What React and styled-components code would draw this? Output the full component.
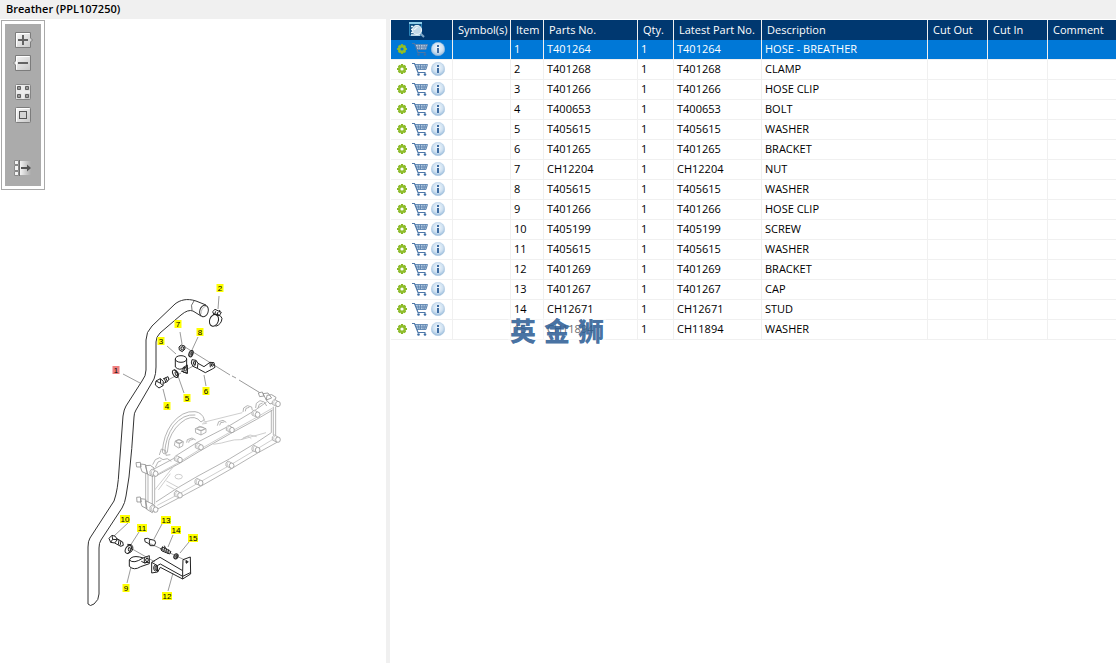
import React, { useState } from "react";
import styled, { createGlobalStyle } from "styled-components";

const parts = [
    { item: 1, partNo: "T401264", description: "HOSE - BREATHER" },
    { item: 2, partNo: "T401268", description: "CLAMP" },
    { item: 3, partNo: "T401266", description: "HOSE CLIP" },
    { item: 4, partNo: "T400653", description: "BOLT" },
    { item: 5, partNo: "T405615", description: "WASHER" },
    { item: 6, partNo: "T401265", description: "BRACKET" },
    { item: 7, partNo: "CH12204", description: "NUT" },
    { item: 8, partNo: "T405615", description: "WASHER" },
    { item: 9, partNo: "T401266", description: "HOSE CLIP" },
    { item: 10, partNo: "T405199", description: "SCREW" },
    { item: 11, partNo: "T405615", description: "WASHER" },
    { item: 12, partNo: "T401269", description: "BRACKET" },
    { item: 13, partNo: "T401267", description: "CAP" },
    { item: 14, partNo: "CH12671", description: "STUD" },
    { item: 15, partNo: "CH11894", description: "WASHER" },
];

const columns = [
    { title: "Symbol(s)", width: 58 },
    { title: "Item", width: 33 },
    { title: "Parts No.", width: 94 },
    { title: "Qty.", width: 36 },
    { title: "Latest Part No.", width: 88 },
    { title: "Description", width: 166 },
    { title: "Cut Out", width: 60 },
    { title: "Cut In", width: 60 },
    { title: "Comment" },
];

// centre of every number label on the drawing
const callouts = [
    { item: 1, x: 116, y: 370 },
    { item: 2, x: 220, y: 288 },
    { item: 3, x: 161, y: 341 },
    { item: 4, x: 167, y: 406 },
    { item: 5, x: 187, y: 398 },
    { item: 6, x: 206, y: 391 },
    { item: 7, x: 178, y: 324 },
    { item: 8, x: 200, y: 332 },
    { item: 9, x: 126, y: 588 },
    { item: 10, x: 125, y: 519 },
    { item: 11, x: 142, y: 528 },
    { item: 12, x: 167, y: 596 },
    { item: 13, x: 166, y: 520 },
    { item: 14, x: 176, y: 530 },
    { item: 15, x: 193, y: 538 },
];

// bolts round the edge of the cover
const bolts = [
    [180, 240], [243, 202], [336, 150], [413, 104], [474, 72],
    [180, 346], [242, 309], [335, 257], [413, 210], [474, 179],
    [107, 281], [107, 389],
];

export default function App(){
    const [selected,setSelected] = useState(1);

    return (
        <Page>
            <GlobalStyle />
            <Symbols />
            <TitleBar>Breather (PPL107250)</TitleBar>
            <Content>
                <Viewer>
                    <Toolbar>
                        <ToolGroup>
                            <ToolButton aria-label="Zoom in"><ToolIcon viewBox="0 0 20 16"><use href="#zoom-in" /></ToolIcon></ToolButton>
                            <ToolButton aria-label="Zoom out"><ToolIcon viewBox="0 0 20 16"><use href="#zoom-out" /></ToolIcon></ToolButton>
                        </ToolGroup>
                        <ToolGroup>
                            <ToolButton aria-label="Fit to window"><ToolIcon viewBox="0 0 20 16"><use href="#fit" /></ToolIcon></ToolButton>
                            <ToolButton aria-label="Actual size"><ToolIcon viewBox="0 0 20 16"><use href="#actual" /></ToolIcon></ToolButton>
                        </ToolGroup>
                        <ToolGroup $last>
                            <ToolButton aria-label="Hide panel"><ToolIcon viewBox="0 0 20 16"><use href="#hide" /></ToolIcon></ToolButton>
                        </ToolGroup>
                    </Toolbar>
                    <Drawing selected={selected} />
                </Viewer>
                <TablePane>
                    <PartsTable>
                        <colgroup>
                            <Col $width={62} />
                            {columns.map((col) => <Col key={col.title} $width={col.width} />)}
                        </colgroup>
                        <thead>
                            <tr>
                                <HeadCell $icon>
                                    <IconButton aria-label="Search parts"><Icon $width={18} $height={18} viewBox="0 0 18 18"><use href="#search" /></Icon></IconButton>
                                </HeadCell>
                                {columns.map((col) => <HeadCell key={col.title}>{col.title}</HeadCell>)}
                            </tr>
                        </thead>
                        <tbody>
                            {parts.map((part) => (
                                <Row key={part.item} $selected={part.item === selected} onClick={() => setSelected(part.item)}>
                                    <Cell>
                                        <Actions>
                                            <IconButton aria-label="Options"><Icon $width={12} $height={14} viewBox="0 0 12 14"><use href="#gear" /></Icon></IconButton>
                                            <IconButton aria-label="Add to cart"><Icon $width={16} $height={14} viewBox="0 0 16 14"><use href="#cart" /></Icon></IconButton>
                                            <IconButton aria-label="Information"><Icon $width={14} $height={14} viewBox="0 0 14 14"><use href="#info" /></Icon></IconButton>
                                        </Actions>
                                    </Cell>
                                    <Cell />
                                    <Cell>{part.item}</Cell>
                                    <Cell>{part.partNo}</Cell>
                                    <Cell>1</Cell>
                                    <Cell>{part.partNo}</Cell>
                                    <Cell>{part.description}</Cell>
                                    <Cell />
                                    <Cell />
                                    <Cell />
                                </Row>
                            ))}
                        </tbody>
                    </PartsTable>
                    <Watermark><span>英</span><span>金</span><span>狮</span></Watermark>
                </TablePane>
            </Content>
        </Page>
    )
}

function Drawing({ selected }){
    return (
        <DrawingSvg viewBox="45 19 341 644" preserveAspectRatio="xMinYMin" role="img" aria-label="Breather parts drawing">
            {/* hose */}
            <g fill="none" stroke="#333" strokeWidth="1">
                <path d="M206 305L196 301C187 298 180 300 175 304L152 326Q146 332 146 340V370Q146 376 142 381L126 406Q124 409 123 416L119 470Q118 490 114 501L90 538Q88 541 88 547V604Q90 607 94 604Q99 600 99 594V548Q99 543 101 540L122 508Q125 503 126 496L129 477Q132 450 134 417Q134 413 136 410L154 379Q156 374 156 367V342Q156 337 160 333L181 315Q188 309 193 311L201 316" />
                <path d="M194 301Q190 305 192 310" strokeWidth=".7" />
                <ellipse cx="204" cy="311" rx="4.2" ry="5.8" transform="rotate(18 204 311)" />
                <path d="M201 314Q201 308 206 306" stroke="#888" strokeWidth=".6" />
            </g>

            {/* leader lines */}
            <g fill="none" stroke="#555" strokeWidth=".6">
                <path d="M123 374L140 383M219 296L218 309M180 332L182 344M198 337L192 350M167 346L176 354M163 389L166 401M178 376L184 393M204 375L206 386M129 522L114 536M139 532L130 546M162 524L154 539M173 535L168 547M189 542L180 553M131 567L127 583M173 573L168 591M127 546L155 562M151 544L189 562M185 347L230 375M232 376L236 378M239 380L262 394M168 380L181 373M186 370L195 365" />
            </g>

            {/* upper clamp, clip, bolt and bracket */}
            <g transform="translate(80 275) scale(.3333)" fill="none" stroke="#222" strokeWidth="3" strokeLinejoin="round">
                <ellipse cx="402" cy="136" rx="13" ry="18" transform="rotate(20 402 136)" />
                <path d="M399 118Q420 115 426 130Q425 148 407 154M398 110L405 103L424 112L418 122L401 117ZM407 109L404 118M414 111L411 121M419 105V112" />
                <ellipse cx="303" cy="252" rx="17" ry="10" />
                <path d="M286 252V276Q298 289 315 277L322 276V295L303 288M320 252V276M309 278L322 270V295L309 291Z" />
                <ellipse cx="316" cy="283" rx="3" ry="5" />
                <path d="M228 318L241 311L250 319L249 332L237 339L226 330ZM241 311L242 325L249 332M242 325L228 318M249 312L264 305Q270 313 262 320L251 325M253 310L257 321M257 308L262 319" />
                <ellipse cx="286" cy="296" rx="7" ry="12" transform="rotate(-28 286 296)" />
                <ellipse cx="289" cy="296" rx="3" ry="6" transform="rotate(-28 289 296)" />
                <path d="M283 285L293 291Q299 301 290 309" />
                <path d="M297 216L304 210L314 213L315 222L307 230L298 225Z" fill="#ddd" />
                <ellipse cx="307" cy="220" rx="4" ry="5" />
                <ellipse cx="333" cy="236" rx="6" ry="10" transform="rotate(20 333 236)" fill="#aaa" />
                <ellipse cx="335" cy="236" rx="2" ry="5" />
                <path d="M336 254L348 256L354 265L372 275L390 262L402 263L405 277L397 282L376 293L352 280L339 274L334 264ZM354 265L352 280M348 256L345 272M390 262L391 277" />
                <ellipse cx="343" cy="264" rx="3" ry="5" />
                <ellipse cx="397" cy="270" rx="3" ry="4" />
            </g>

            {/* lower clip, screw and bracket */}
            <g transform="translate(75 500) scale(.3333)" fill="none" stroke="#222" strokeWidth="3" strokeLinejoin="round">
                <path d="M102 115L111 106L121 109L127 119L119 129L107 127ZM111 106L113 118L107 127M113 118L127 119M126 116L143 126L145 136L137 139L119 129M132 120L130 134M138 123L135 137" />
                <ellipse cx="160" cy="148" rx="8" ry="13" transform="rotate(28 160 148)" />
                <path d="M157 133L169 134Q179 144 168 156L157 161" />
                <ellipse cx="163" cy="148" rx="3" ry="6" />
                <path d="M194 171Q170 166 163 180Q176 193 204 174" />
                <path d="M163 180V199Q177 213 197 200L223 191V167L204 174L194 171M208 174V188L223 187M199 184L211 190" />
                <ellipse cx="216" cy="180" rx="4" ry="5" />
                <path d="M209 116L218 115L225 118L239 121Q245 128 238 137L226 137L220 130L210 125ZM225 118Q220 124 226 137" />
                <path d="M257 146L264 142L288 155L284 162L261 153ZM263 139L260 153M269 142L266 156M275 145L272 159M281 148L278 161M268 137L272 145" />
                <ellipse cx="303" cy="169" rx="6" ry="8" transform="rotate(25 303 169)" fill="#999" />
                <ellipse cx="305" cy="169" rx="2" ry="4" />
                <path d="M230 187L255 172L323 212L324 179L346 171L347 222L323 237L256 202L248 216L230 219ZM230 187L247 197L248 216M247 197L256 192L323 229L346 218M323 212V237" />
                <ellipse cx="242" cy="204" rx="6" ry="9" />
                <ellipse cx="243" cy="204" rx="3" ry="5" />
                <ellipse cx="335" cy="186" rx="2" ry="4" fill="#333" />
            </g>

            {/* cover the breather is fixed to */}
            <g transform="translate(120 380) scale(.3333)" fill="none" stroke="#a6a6a6" strokeWidth="2.5" strokeLinejoin="round">
                <path d="M77 268L104 266L160 236L173 224L232 187L325 139L405 91L440 66M104 290L177 251L240 213L331 161L410 118L458 90M79 374L104 390L119 384L180 352L242 319L333 267L413 219L471 187M77 268V369M84 271V375M97 290V379M104 290V373M454 90V158L409 188L328 237L234 288L174 323L108 366M460 80V165M467 80V173" />
                <path d="M112 283L177 247L240 208L331 156L410 112L458 84M112 376L177 342L240 306L331 255L411 207L467 173" stroke="#c4c4c4" />
                <path d="M127 216Q130 166 155 132Q187 91 225 95Q247 98 253 119L243 126Q226 104 197 118Q162 139 147 181L142 217L132 222ZM134 218Q137 171 161 137Q190 101 226 105M124 207L137 212L138 226L151 224M118 225L124 207" />
                <path d="M250 127L367 98M250 118L260 130L246 132M280 193Q306 190 324 184T363 179L390 165L410 170M363 179L438 158M369 174L384 168L394 176M104 330L165 254M115 330L151 281M139 303L178 324M139 315L178 336" stroke="#c4c4c4" />
                <g>
                    <path d="M166 183L177 178L190 185L188 198L176 204L163 196ZM166 183L178 190L190 185M178 190V203" />
                    <ellipse cx="177" cy="185" rx="9" ry="5" />
                    <path d="M226 146L239 139L258 146V157L243 165L227 158ZM226 146L243 152L258 146M243 152V165" />
                    <ellipse cx="243" cy="146" rx="10" ry="5" />
                    <ellipse cx="176" cy="290" rx="11" ry="7" stroke="#c4c4c4" />
                    <path d="M200 188L202 179L216 174L227 180M206 188L208 181L220 178M292 137L296 125L309 121L319 127M299 136L302 128L313 126M369 96L371 84L382 77L395 81L397 91M376 94L378 85L388 82M98 254L106 239L119 233L129 239L142 236L154 244M106 262L114 246L124 242M407 84L409 70L420 62L433 66L440 78M414 84L418 73L428 69" />
                </g>
                <g stroke="#8f8f8f" fill="#fff">
                    <path d="M48 248L61 247L63 261L50 261ZM62 252L77 254L82 282L66 275Q60 262 62 252ZM76 257L91 256L102 264L99 290L83 283ZM50 352L61 351L64 366L51 366ZM62 356L77 358L81 386L66 379Q60 366 62 356ZM76 362L91 369L104 376L97 398L79 387Z" />
                    <path d="M415 39L427 36L432 48L419 50ZM429 41L444 39L455 54L439 60ZM441 46L455 44L468 52L464 66L450 72L439 60Z" />
                </g>
                {bolts.map(([x, y]) => (
                    <g key={`${x}-${y}`} transform={`translate(${x} ${y})`} fill="#fff">
                        <path d="M0 -8L-11 -14Q-20 -10 -17 1L-2 8" />
                        <path d="M-9 -13Q-16 -7 -11 4" stroke="#c4c4c4" />
                        <ellipse rx="7" ry="8" stroke="#999" />
                    </g>
                ))}
            </g>

            {callouts.map((mark) => {
                const width = mark.item > 9 ? 10 : 7;
                return (
                    <g key={mark.item}>
                        <rect x={mark.x - width / 2} y={mark.y - 4} width={width} height="8" fill={mark.item === selected ? "#f08080" : "#ffff00"} />
                        <CalloutText x={mark.x} y={mark.y + 3}>{mark.item}</CalloutText>
                    </g>
                )
            })}
        </DrawingSvg>
    )
}

function Symbols(){
    return (
        <SymbolSheet aria-hidden="true">
            <defs>
                <linearGradient id="metal" x1="0" y1="0" x2="1" y2="1">
                    <stop offset="0" stopColor="#fafafa" />
                    <stop offset="1" stopColor="#c6c6c6" />
                </linearGradient>
                <linearGradient id="fade">
                    <stop offset="0" stopColor="#f4f4f4" />
                    <stop offset="1" stopColor="#ababab" />
                </linearGradient>
                <radialGradient id="glass" cx=".5" cy=".4" r=".6">
                    <stop offset="0" stopColor="#f2f8fd" />
                    <stop offset=".6" stopColor="#cfe1f1" />
                    <stop offset="1" stopColor="#94b8d9" />
                </radialGradient>
            </defs>
            <symbol id="zoom-in" viewBox="0 0 20 16">
                <path d="M2.500 .5H17.500V6L19.500 8L17.500 10V15.500H2.500Z" fill="url(#metal)" stroke="#7c7c7c" />
                <path d="M3.500 14.500V1.500H16.500" fill="none" stroke="#fff" />
                <path d="M5 8H15M10 3V13" stroke="#636363" strokeWidth="2" />
            </symbol>
            <symbol id="zoom-out" viewBox="0 0 20 16">
                <path d="M2.500 .5H17.500V15.500H2.500V10L.5 8L2.500 6Z" fill="url(#metal)" stroke="#7c7c7c" />
                <path d="M3.500 14.500V1.500H16.500" fill="none" stroke="#fff" />
                <path d="M5 8H15" stroke="#636363" strokeWidth="2" />
            </symbol>
            <symbol id="fit" viewBox="0 0 20 16">
                <rect x="2.500" y=".5" width="15" height="15" rx="1" fill="url(#metal)" stroke="#858585" />
                <path d="M10 1V15M3 8H17" stroke="#ececec" strokeWidth="3" />
                <path d="M4.500 2.500H7.500V5.500H4.500ZM12.500 2.500H15.500V5.500H12.500ZM4.500 10.500H7.500V13.500H4.500ZM12.500 10.500H15.500V13.500H12.500Z" fill="#999" stroke="#606060" />
            </symbol>
            <symbol id="actual" viewBox="0 0 20 16">
                <rect x="2.500" y=".5" width="15" height="15" rx="1" fill="url(#metal)" stroke="#7c7c7c" />
                <path d="M3.500 14.500V1.500H16.500" fill="none" stroke="#fff" />
                <rect x="6.500" y="4.500" width="7" height="7" fill="#d4d4d4" stroke="#555" />
            </symbol>
            <symbol id="hide" viewBox="0 0 20 16">
                <path d="M7 1H18V15H7Z" fill="url(#fade)" />
                <path d="M1.500 .5H5.500V4.500H1.500ZM1.500 5.500H5.500V10.500H1.500ZM1.500 11.500H5.500V15.500H1.500Z" fill="#f4f4f4" stroke="#8a8a8a" />
                <path d="M6.500 0V16" stroke="#6d6d6d" />
                <path d="M8 8H15" stroke="#555" strokeWidth="2" />
                <path d="M14 4.500L18 8L14 11.500Z" fill="#555" />
            </symbol>
            <symbol id="gear" viewBox="0 0 12 14">
                <path d="M5 2V4M5 10V12M0 7H2M8 7H10M1.600 3.600L3 5M7 9L8.400 10.400M8.400 3.600L7 5M3 9L1.600 10.400" stroke="#86b524" strokeWidth="2.200" />
                <circle cx="5" cy="7" r="2.800" fill="none" stroke="#8fbe2b" strokeWidth="2.400" />
            </symbol>
            <symbol id="cart" viewBox="0 0 16 14">
                <path d="M3.500 2.500H15.500L14 7.500H5Z" fill="#b5cbe1" />
                <path d="M3 2.500H15.500L14 7.500H5M4 5H15M6 2.500L7 7.500M8.500 2.500V7.500M11 2.500V7.500M13.500 2.500L12.500 7.500" fill="none" stroke="#5d84b0" strokeWidth=".9" />
                <path d="M0 1.500H2.500L6 10.500H13.500" fill="none" stroke="#4c77a8" strokeWidth="1.200" />
                <circle cx="6.500" cy="12.500" r="1.300" fill="#3f6fa5" />
                <circle cx="13" cy="12.500" r="1.300" fill="#3f6fa5" />
            </symbol>
            <symbol id="info" viewBox="0 0 14 14">
                <circle cx="7" cy="7" r="6.800" fill="url(#glass)" stroke="#a9c6e0" strokeWidth=".4" />
                <path d="M6 3H8V5H6ZM6 6H8V11H6Z" fill="#3f6da3" />
            </symbol>
            <symbol id="search" viewBox="0 0 18 18">
                <path d="M.5 2.500H12.500V15.500H.5Z" fill="#0d4d80" stroke="#2f86b8" />
                <path d="M0 3H13" stroke="#8ccbe8" strokeWidth="2" />
                <path d="M2 6.500H4M2 9.500H4M2 12.500H4M2 15H11" stroke="#e8f4fa" strokeWidth="1.300" />
                <path d="M11 13L15 17" stroke="#7fa6c6" strokeWidth="2" />
                <circle cx="8" cy="10" r="4.500" fill="#c3d9e8" stroke="#eef5f9" strokeWidth="1.200" />
                <path d="M5.500 10Q6 7.500 8.500 7.500" fill="none" stroke="#fff" />
            </symbol>
        </SymbolSheet>
    )
}

const GlobalStyle = createGlobalStyle`
    body{
        margin:0;
        background-color:white;
        color:black;
        font-family:"Open Sans", "Noto Sans", sans-serif;
        font-size:11px;
    }
`;

const Page = styled.div`
    min-height:100vh;
    display:flex;
    flex-direction:column;
`;

const TitleBar = styled.h1`
    margin:0;
    height:19px;
    padding-left:6px;
    background-color:#f0f0f0;
    font-size:11px;
    line-height:18px;
    font-weight:600;
`;

const Content = styled.main`
    flex:1;
    display:flex;
`;

const Viewer = styled.section`
    flex:0 0 386px;
    display:flex;
    align-items:flex-start;
    border-right:4px solid #f0f0f0;
`;

const Toolbar = styled.div`
    box-sizing:border-box;
    width:44px;
    flex:none;
    margin:1px 0 0 1px;
    padding:11px 7px 13px;
    border:1px solid #a9a9a9;
    outline:3px solid white;
    outline-offset:-4px;
    background-color:#ababab;
    display:flex;
    flex-direction:column;
    align-items:center;
    gap:13px;
`;

const ToolGroup = styled.div`
    display:flex;
    flex-direction:column;
    gap:7px;
    margin-top:${(props) => props.$last ? "24px" : "0"};
`;

const ToolButton = styled.button`
    display:block;
    padding:0;
    border:none;
    background:none;
    cursor:pointer;
`;

const ToolIcon = styled.svg`
    display:block;
    width:20px;
    height:16px;
`;

const DrawingSvg = styled.svg`
    flex:1;
    min-width:0;
`;

const CalloutText = styled.text`
    font-family:"Liberation Sans", Arial, sans-serif;
    font-size:8px;
    text-anchor:middle;
    fill:black;
`;

const TablePane = styled.section`
    flex:1;
    min-width:0;
    position:relative;
    padding:1px 0 0 1px;
`;

const PartsTable = styled.table`
    width:100%;
    table-layout:fixed;
    border-collapse:separate;
    border-spacing:0;
`;

const Col = styled.col`
    width:${(props) => props.$width ? `${props.$width}px` : "auto"};
`;

const HeadCell = styled.th`
    box-sizing:border-box;
    height:20px;
    padding:0 0 0 ${(props) => props.$icon ? "18px" : "5px"};
    border-right:1px solid #f0f0f0;
    background-color:#003870;
    color:white;
    font-weight:normal;
    line-height:20px;
    text-align:left;
    vertical-align:top;
    white-space:nowrap;
    &:last-child{
        border-right:none;
    }
`;

const Cell = styled.td`
    box-sizing:border-box;
    height:20px;
    padding:0 0 0 3px;
    border-right:1px solid #f0f0f0;
    border-bottom:1px solid #f0f0f0;
    line-height:17px;
    vertical-align:top;
    white-space:nowrap;
    &:last-child{
        border-right:none;
    }
`;

const Row = styled.tr`
    background-color:${(props) => props.$selected ? "#0078d7" : "white"};
    color:${(props) => props.$selected ? "white" : "black"};
`;

const Actions = styled.div`
    height:18px;
    display:flex;
    align-items:center;
    gap:3px;
    padding-left:3px;
`;

const IconButton = styled.button`
    display:block;
    padding:0;
    border:none;
    background:none;
    cursor:pointer;
`;

const Icon = styled.svg`
    display:block;
    width:${(props) => props.$width}px;
    height:${(props) => props.$height}px;
`;

const SymbolSheet = styled.svg`
    position:absolute;
    width:0;
    height:0;
`;

const Watermark = styled.div`
    position:absolute;
    top:299px;
    left:118px;
    display:flex;
    gap:8px;
    padding:0 2px;
    background-color:rgba(255,255,255,0.4);
    color:rgba(48,96,150,0.9);
    font-family:"Noto Sans CJK SC", sans-serif;
    font-size:26px;
    font-weight:900;
    line-height:24px;
    pointer-events:none;
`;
